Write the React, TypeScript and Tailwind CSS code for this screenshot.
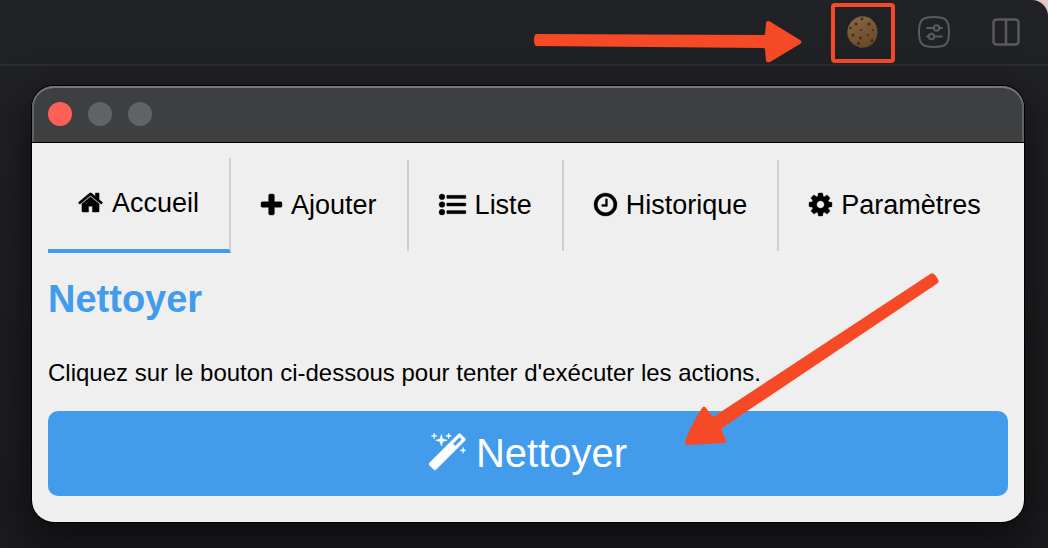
import type { ReactNode } from "react";

function Glyph({ box, className, children }: { box: string; className: string; children: ReactNode }) {
  return (
    <svg viewBox={box} className={className} fill="currentColor" stroke="currentColor" strokeWidth="24" overflow="visible" aria-hidden="true">
      {children}
    </svg>
  );
}

const HomeIcon = () => (
  <Glyph box="0 128 1664 1536" className="mb-[2px] h-[23px] w-[25px]">
    <path d="M1408 992v480q0 26-19 45t-45 19h-384v-384h-256v384h-384q-26 0-45-19t-19-45v-480q0-1 .5-3t.5-3l575-474 575 474q1 2 1 6zm223-69l-62 74q-8 9-21 11h-3q-13 0-21-7l-692-577-692 577q-12 8-24 7-13-2-21-11l-62-74q-8-10-7-23.5t11-21.5l719-599q32-26 76-26t76 26l244 204v-195q0-14 9-23t23-9h192q14 0 23 9t9 23v408l219 182q10 8 11 21.5t-7 23.5z" />
  </Glyph>
);

const PlusIcon = () => (
  <Glyph box="192 128 1408 1408" className="mb-[2px] h-[21px] w-[21px]">
    <path d="M1600 736v192q0 40-28 68t-68 28h-416v416q0 40-28 68t-68 28h-192q-40 0-68-28t-28-68v-416h-416q-40 0-68-28t-28-68v-192q0-40 28-68t68-28h416v-416q0-40 28-68t68-28h192q40 0 68 28t28 68v416h416q40 0 68 28t28 68z" />
  </Glyph>
);

const ListIcon = () => (
  <Glyph box="0 192 1792 1408" className="mb-[2px] h-[21px] w-[27px]">
    <circle cx="192" cy="384" r="192" />
    <circle cx="192" cy="896" r="192" />
    <circle cx="192" cy="1408" r="192" />
    <rect x="512" y="280" width="1280" height="208" rx="32" />
    <rect x="512" y="792" width="1280" height="208" rx="32" />
    <rect x="512" y="1304" width="1280" height="208" rx="32" />
  </Glyph>
);

const ClockIcon = () => (
  <Glyph box="128 128 1536 1536" className="mb-[2px] h-[23px] w-[23px]">
    <path d="M1024 544v448q0 14-9 23t-23 9h-320q-14 0-23-9t-9-23v-64q0-14 9-23t23-9h224v-352q0-14 9-23t23-9h64q14 0 23 9t9 23zm416 352q0-148-73-273t-198-198-273-73-273 73-198 198-73 273 73 273 198 198 273 73 273-73 198-198 73-273zm224 0q0 209-103 385.5t-279.5 279.5-385.5 103-385.5-103-279.5-279.5-103-385.5 103-385.5 279.5-279.5 385.5-103 385.5 103 279.5 279.5 103 385.5z" />
  </Glyph>
);

const CogIcon = () => (
  <Glyph box="128 128 1536 1536" className="mb-[2px] h-[23px] w-[23px]">
    <path d="M1152 896q0-106-75-181t-181-75-181 75-75 181 75 181 181 75 181-75 75-181zm512-109v222q0 12-8 23t-20 13l-185 28q-19 54-39 91 35 50 107 138 10 12 10 25t-9 23q-27 37-99 108t-94 71q-12 0-26-9l-138-108q-44 23-91 38-16 136-29 186-7 28-36 28h-222q-14 0-24.5-8.5t-11.5-21.5l-28-184q-49-16-90-37l-141 107q-10 9-25 9-14 0-25-11-126-114-165-168-7-10-7-23 0-12 8-23 15-21 51-66.5t54-70.5q-27-50-41-99l-183-27q-13-2-21-12.5t-8-23.5v-222q0-12 8-23t19-13l186-28q14-46 39-92-40-57-107-138-10-12-10-24 0-10 9-23 26-36 98.5-107.5t94.5-71.5q13 0 26 10l138 107q44-23 91-38 16-136 29-186 7-28 36-28h222q14 0 24.5 8.5t11.5 21.5l28 184q49 16 90 37l142-107q9-9 24-9 13 0 25 10 129 119 165 170 7 8 7 22 0 12-8 23-15 21-51 66.5t-54 70.5q26 50 41 98l183 28q13 2 21 12.5t8 23.5z" />
  </Glyph>
);

const MagicIcon = () => (
  <Glyph box="91 0 1637 1637" className="mb-[2px] h-[37px] w-[37px]">
    <path d="M1254 581l293-293-107-107-293 293zm447-293q0 27-18 45l-1286 1286q-18 18-45 18t-45-18l-198-198q-18-18-18-45t18-45l1286-1286q18-18 45-18t45 18l198 198q18 18 18 45zm-1351-190l98 30-98 30-30 98-30-98-98-30 98-30 30-98zm350 162l196 60-196 60-60 196-60-196-196-60 196-60 60-196zm930 478l98 30-98 30-30 98-30-98-98-30 98-30 30-98zm-640-640l98 30-98 30-30 98-30-98-98-30 98-30 30-98z" />
  </Glyph>
);

const chips = [
  [15, 3, 1.4], [9, 8, 1.5], [22, 8, 1.6], [3.5, 12, 1.2], [14, 14, 1], [26, 14, 1.1],
  [6, 19, 1.5], [21, 19, 1], [13.5, 22, 1.4], [25, 24.5, 1.5], [11.5, 27.5, 1.4],
];

const CookieIcon = () => (
  <svg viewBox="0 0 31 32" className="mr-[2px] mb-[2px] h-8 w-[31px]" aria-hidden="true">
    <defs>
      <linearGradient id="dough" x1="0" y1="0" x2="0.4" y2="1">
        <stop offset="0" stopColor="#8a6845" />
        <stop offset="1" stopColor="#694a2c" />
      </linearGradient>
    </defs>
    <path d="M10 1.500C15-.8 22 .5 25 4c4 3 6 9 5.400 14-.3 5-4 10-8 12-4 2.200-9 2.200-12 .5C5 28.500.8 23 .4 18-.2 11 4 4 10 1.500z" fill="url(#dough)" />
    {chips.map(([x, y, r]) => (
      <circle key={`${x}-${y}`} cx={x} cy={y} r={r} fill="#492a14" />
    ))}
  </svg>
);

const SlidersIcon = () => (
  <svg viewBox="0 0 32 32" className="h-8 w-8" fill="none" stroke="currentColor" strokeWidth="2" strokeLinecap="round" aria-hidden="true">
    <path d="M16 1c12 0 15 3 15 15s-3 15-15 15S1 28 1 16 4 1 16 1z" />
    <path d="M9 12h6.500M21.500 12H24M9 20.500h2M17 20.500h7" />
    <circle cx="18.500" cy="12" r="2.700" />
    <circle cx="13.500" cy="20.500" r="2.700" />
  </svg>
);

const SplitIcon = () => (
  <svg viewBox="0 0 28 28" className="h-7 w-7" fill="none" stroke="currentColor" strokeWidth="2.500" aria-hidden="true">
    <rect x="1.500" y="1.500" width="25" height="25" rx="3" />
    <path d="M14 2v24" />
  </svg>
);

const tabs = [
  { label: "Accueil", icon: <HomeIcon /> },
  { label: "Ajouter", icon: <PlusIcon /> },
  { label: "Liste", icon: <ListIcon /> },
  { label: "Historique", icon: <ClockIcon /> },
  { label: "Paramètres", icon: <CogIcon /> },
];

export default function App() {
  return (
    <div className="min-h-screen bg-[#e3c9c6] font-['Liberation_Sans',Arial,sans-serif] text-black">
      <div className="min-h-screen overflow-hidden rounded-tr-2xl bg-linear-to-b from-[#212226] to-[#1b1b1e]">
        <header className="flex h-[66px] items-center justify-end border-b-2 border-[#2b2c30] pr-7 text-[#595a5d]">
          <svg viewBox="0 0 268 42" className="mt-5 mr-[29px] h-[42px] w-[268px]" fill="#f64a27" aria-hidden="true">
            <path d="M2 13l228 1q1 0 1-1l1-11q0-2 3-2l31 19q3 2 0 4l-30 18q-3 1-4-1l-1-12q0-1-2-1L2 25q-2-1-2-6t2-6z" />
          </svg>
          <button type="button" aria-label="Cookies" className="mt-[2px] flex h-[60px] w-16 items-center justify-center rounded-[4px] border-4 border-[#f64a27]">
            <CookieIcon />
          </button>
          <button type="button" aria-label="Réglages" className="ml-[23px]">
            <SlidersIcon />
          </button>
          <button type="button" aria-label="Diviser" className="ml-[42px]">
            <SplitIcon />
          </button>
        </header>

        <main className="relative mt-5 mr-6 mb-[26px] ml-8 rounded-[22px] bg-[#efefef] shadow-[0_0_0_1px_#000,0_16px_40px_6px_rgba(0,0,0,0.5)]">
          <div className="h-[57px] overflow-hidden rounded-t-[22px] border-b border-black bg-[#3e3f41]">
            <div className="flex h-14 items-center gap-4 rounded-t-[22px] pl-4 shadow-[inset_0_2px_0_#77787a,inset_2px_0_0_#606163,inset_-2px_0_0_#606163]">
              <button type="button" aria-label="Fermer" className="size-6 rounded-full bg-[#ff5f57]" />
              <button type="button" aria-label="Réduire" className="size-6 rounded-full bg-[#626366]" />
              <button type="button" aria-label="Agrandir" className="size-6 rounded-full bg-[#626366]" />
            </div>
          </div>

          <div className="px-4 pt-[15px] pb-[26px]">
            <nav className="flex items-center text-[27px] leading-[31px]">
              {tabs.map((tab, i) => (
                <a
                  key={tab.label}
                  href="#"
                  aria-current={i === 0 ? "page" : undefined}
                  className={`flex items-center gap-[9px] py-[30px] pr-[30px] pl-[30px] whitespace-nowrap ${
                    i < tabs.length - 1 ? "border-r-2 border-r-[#cfcfcf]" : ""
                  } ${i === 0 ? "border-b-4 border-b-[#429ceb]" : ""}`}
                >
                  {tab.icon}
                  {tab.label}
                </a>
              ))}
            </nav>
            <h1 className="mt-6 text-[38px] leading-[44px] font-bold text-[#429ceb]">Nettoyer</h1>
            <p className="mt-[38px] text-2xl leading-7">
              Cliquez sur le bouton ci-dessous pour tenter d'exécuter les actions.
            </p>
            <button
              type="button"
              className="mt-6 flex h-[85px] w-full items-center justify-center gap-[10px] rounded-[10px] bg-[#429ceb] pb-[2px] text-[40px] leading-[46px] text-white"
            >
              <MagicIcon />
              Nettoyer
            </button>
          </div>

          <svg viewBox="0 0 254 173" className="pointer-events-none absolute right-[85px] bottom-[76px] h-[173px] w-[254px]" fill="#f64a27" aria-hidden="true">
            <path d="M246 .5q2-1 4 1.500 5 6 3 8L37 155q-1 1 0 3l4 9q1 3-2 3L3 172q-4 0-3-4 7-18 17-33 2-3 4 0l7 9L246 .5z" />
          </svg>
        </main>
      </div>
    </div>
  );
}
